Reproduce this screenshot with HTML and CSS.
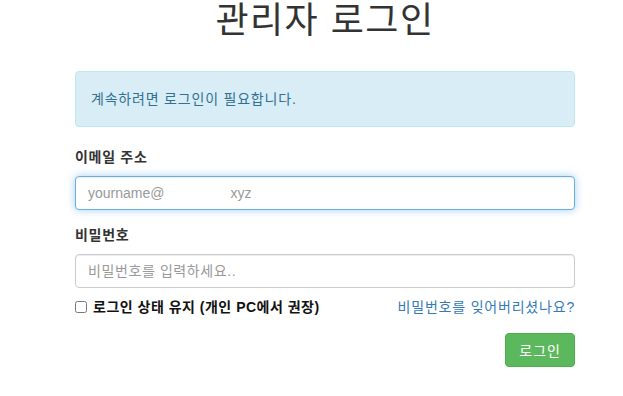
FILE: index.html
```html
<!DOCTYPE html>
<html lang="ko">
<head>
<meta charset="utf-8">
<title>관리자 로그인</title>
<link rel="stylesheet" href="styles.css">
</head>
<body>
<div class="container">
  <h1 class="title">관리자 로그인</h1>
  <div class="alert">계속하려면 로그인이 필요합니다.</div>
  <form class="form">
    <div class="form-group">
      <label class="label" for="email">이메일 주소</label>
      <input class="control focused" id="email" type="text" placeholder="yourname@&#160;&#160;&#160;&#160;&#160;&#160;&#160;&#160;&#160;&#160;&#160;&#160;&#160;&#160;&#160;&#160;&#160;xyz">
    </div>
    <div class="form-group">
      <label class="label" for="pw">비밀번호</label>
      <input class="control ko" id="pw" type="password" placeholder="비밀번호를 입력하세요..">
    </div>
    <div class="row">
      <label class="check"><input type="checkbox" class="box"> 로그인 상태 유지 (개인 PC에서 권장)</label>
      <a class="link" href="#">비밀번호를 잊어버리셨나요?</a>
    </div>
    <div class="actions">
      <button type="button" class="btn">로그인</button>
    </div>
  </form>
</div>
</body>
</html>
```
FILE: styles.css
```css
html, body {
  margin: 0;
  padding: 0;
  background: #fff;
}
body {
  font-family: "Liberation Sans", "Noto Sans CJK KR", sans-serif;
  font-size: 14px;
  line-height: 20px;
  color: #333;
}
.container {
  width: 500px;
  margin-left: 75px;
}
.title {
  margin: 0;
  font-size: 36px;
  font-weight: 400;
  line-height: 42px;
  letter-spacing: 1.5px;
  text-align: center;
  color: #333;
}
.alert {
  margin-top: 29px;
  margin-bottom: 20px;
  padding: 17px 15px;
  border: 1px solid #bce8f1;
  border-radius: 4px;
  background: #d9edf7;
  color: #31708f;
  letter-spacing: 0.8px;
}
.form-group {
  margin-bottom: 15px;
}
.label {
  display: block;
  font-weight: 700;
  margin-bottom: 9px;
  letter-spacing: 0.7px;
}
.control {
  display: block;
  box-sizing: border-box;
  width: 100%;
  height: 34px;
  padding: 6px 12px;
  font-family: "Liberation Sans", "Noto Sans CJK KR", sans-serif;
  font-size: 14px;
  color: #555;
  border: 1px solid #ccc;
  border-radius: 4px;
  background: #fff;
  box-shadow: inset 0 1px 1px rgba(0,0,0,.075);
  outline: none;
}
.control.ko {
  letter-spacing: 0.6px;
}
.control::placeholder {
  color: #999;
}
.control.focused {
  border-color: #66afe9;
  box-shadow: inset 0 1px 1px rgba(0,0,0,.075), 0 0 8px rgba(102,175,233,.6);
}
.row {
  display: flex;
  justify-content: space-between;
  align-items: center;
  margin-top: -6px;
}
.check {
  display: flex;
  align-items: center;
  font-weight: 700;
  color: #111;
  letter-spacing: 0.5px;
}
.box {
  margin: 0 6px 0 0;
  width: 12px;
  height: 12px;
}
.link {
  color: #337ab7;
  text-decoration: none;
  letter-spacing: 0.8px;
}
.actions {
  display: flex;
  justify-content: flex-end;
  margin-top: 16px;
}
.btn {
  height: 34px;
  padding: 6px 13px;
  font-family: "Liberation Sans", "Noto Sans CJK KR", sans-serif;
  font-size: 14px;
  letter-spacing: 1px;
  color: #fff;
  background: #5cb85c;
  border: 1px solid #4cae4c;
  border-radius: 4px;
}
```
